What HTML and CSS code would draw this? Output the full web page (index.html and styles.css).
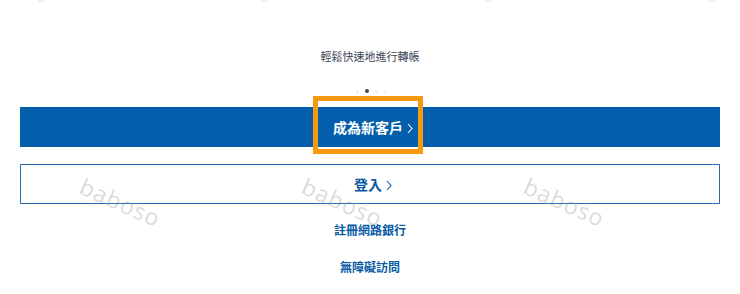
FILE: index.html
```html
<!DOCTYPE html>
<html lang="zh-Hant">
<head>
<meta charset="utf-8">
<link rel="stylesheet" href="styles.css">
</head>
<body>
<main class="page">
  <div class="wm-arcs"><span class="arc"></span><span class="arc"></span><span class="arc"></span><span class="arc"></span></div>
  <p class="caption">輕鬆快速地進行轉帳</p>
  <div class="dots"><span class="dot"></span><span class="dot active"></span><span class="dot"></span><span class="dot"></span></div>
  <a class="btn btn-primary"><span class="label">成為新客戶<svg class="chev" viewBox="0 0 6 11" width="6" height="11"><path d="M1 1 L5 5.5 L1 10" fill="none" stroke="currentColor" stroke-width="1.1"/></svg></span><span class="highlight"></span></a>
  <a class="btn btn-outline"><span class="label">登入<svg class="chev" viewBox="0 0 6 11" width="6" height="11"><path d="M1 1 L5 5.5 L1 10" fill="none" stroke="currentColor" stroke-width="1.1"/></svg></span></a>
  <a class="link link-first">註冊網路銀行</a>
  <a class="link link-second">無障礙訪問</a>
  <div class="wm wm1">baboso</div>
  <div class="wm wm2">baboso</div>
  <div class="wm wm3">baboso</div>
</main>
</body>
</html>
```
FILE: styles.css
```css
html, body {
  margin: 0;
  padding: 0;
  background: #ffffff;
}
.page {
  position: relative;
  width: 740px;
  height: 294px;
  overflow: hidden;
  box-sizing: border-box;
  padding: 0 20px;
  display: flex;
  flex-direction: column;
  align-items: stretch;
  font-family: "Noto Sans CJK TC", "Noto Sans", sans-serif;
}
.wm-arcs {
  position: absolute;
  left: 0;
  top: 0;
  width: 740px;
  height: 4px;
  overflow: hidden;
}
.arc {
  position: absolute;
  top: -8px;
  width: 9px;
  height: 10px;
  box-sizing: border-box;
  border: 1.5px solid rgba(150, 150, 150, 0.35);
  border-radius: 50%;
}
.arc:nth-child(1) { left: 37px; }
.arc:nth-child(2) { left: 260px; }
.arc:nth-child(3) { left: 484px; }
.arc:nth-child(4) { left: 707px; }
.caption {
  margin: 48px 0 0;
  height: 16px;
  line-height: 16px;
  text-align: center;
  font-size: 11px;
  color: #3a4556;
}
.dots {
  margin-top: 22px;
  height: 10px;
  display: flex;
  justify-content: center;
  align-items: center;
  gap: 6px;
  padding-left: 2px;
}
.dot {
  width: 3px;
  height: 3px;
  border-radius: 50%;
  background: #eceef1;
}
.dot.active {
  width: 4px;
  height: 4px;
  background: #3d4a5c;
}
.btn {
  display: flex;
  justify-content: center;
  align-items: center;
  box-sizing: border-box;
  height: 40px;
  font-size: 14px;
  font-weight: 700;
  text-decoration: none;
}
.btn-primary {
  position: relative;
  margin-top: 11px;
  background: #035fac;
  color: #ffffff;
}
.btn-outline {
  margin-top: 17px;
  border: 1.5px solid #2a6eb0;
  background: #ffffff;
  color: #0a58a3;
}
.label {
  position: relative;
  display: inline-flex;
  align-items: center;
  padding-left: 6px;
}
.chev {
  display: block;
  margin-left: 4px;
  margin-top: 2px;
}
.highlight {
  position: absolute;
  left: 293px;
  top: -11px;
  width: 110px;
  height: 58px;
  box-sizing: border-box;
  border: 5px solid #f7980f;
}
.link {
  text-align: center;
  font-size: 12px;
  font-weight: 700;
  color: #0a5aa5;
  height: 18px;
  line-height: 18px;
}
.link-first {
  margin-top: 17px;
}
.link-second {
  margin-top: 19px;
}
.wm {
  position: absolute;
  font-family: "Open Sans", "DejaVu Sans", sans-serif;
  font-size: 23px;
  letter-spacing: 1px;
  color: rgba(150, 150, 150, 0.35);
  transform: rotate(24deg);
  transform-origin: left top;
  pointer-events: none;
}
.wm1 { left: 88px; top: 170px; }
.wm2 { left: 310px; top: 170px; }
.wm3 { left: 532px; top: 170px; }
```
